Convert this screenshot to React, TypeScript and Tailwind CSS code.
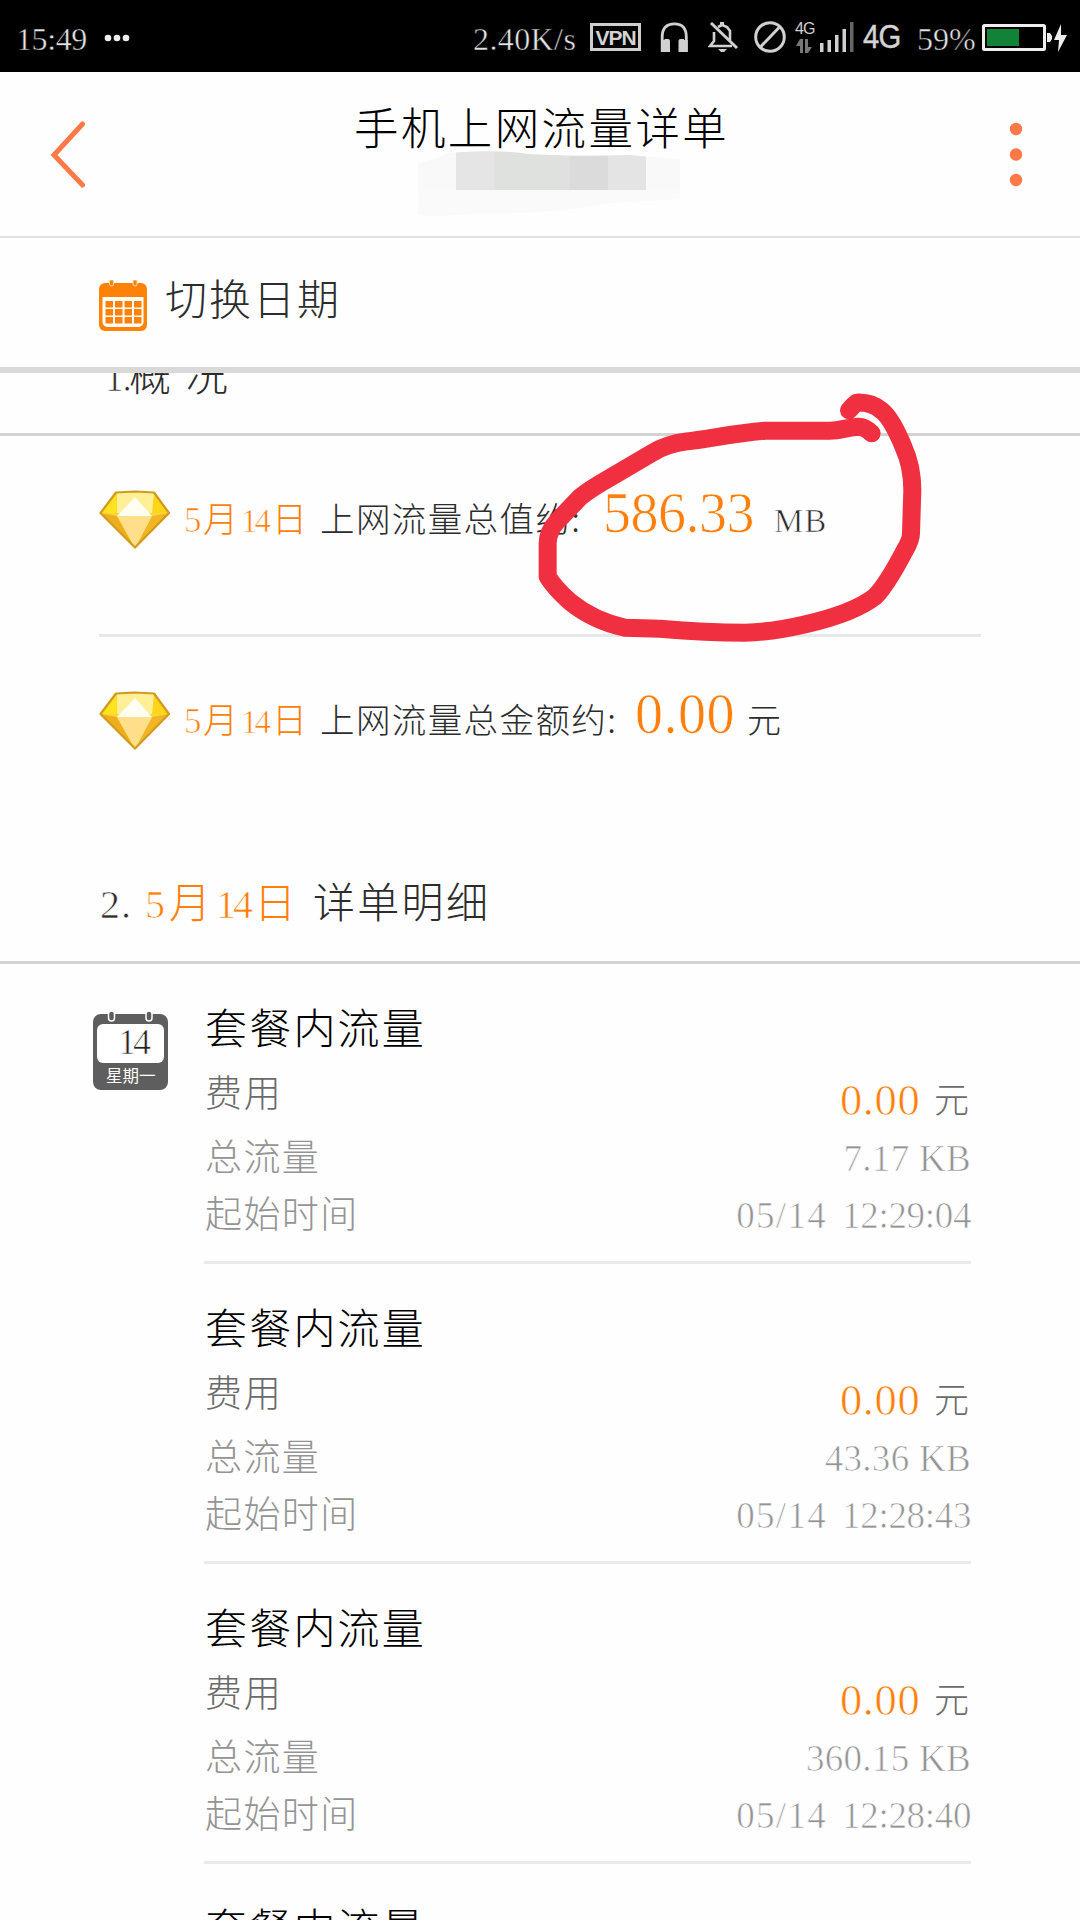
import React from "react";

const CJK = "font-['Noto_Sans_CJK_SC',sans-serif] font-light";
const LAT = "font-['Liberation_Serif',serif]";

function C({ className = "", children }: { className?: string; children: React.ReactNode }) {
  return <span className={`${CJK} block shrink-0 whitespace-pre leading-none ${className}`}>{children}</span>;
}

// A thin outline in the page colour slims the strokes of the serif digits.
function L({ dark = false, className = "", children }: { dark?: boolean; className?: string; children: React.ReactNode }) {
  const slim = dark ? "[-webkit-text-stroke:0.5px_#000]" : "[-webkit-text-stroke:0.7px_#fefefe]";
  return <span className={`${LAT} ${slim} block shrink-0 whitespace-pre leading-none ${className}`}>{children}</span>;
}

function StatusBar() {
  return (
    <div className="flex h-[72px] shrink-0 items-start bg-black text-[#e4e4e4]">
      <L dark className="ml-[16px] mt-[23px] w-[88px] text-[32px] tracking-[-0.4px]">15:49</L>
      <svg className="mt-[33px] shrink-0" width="28" height="10" fill="#eee">
        <circle cx="4" cy="5" r="3.3" />
        <circle cx="13" cy="5" r="3.3" />
        <circle cx="22" cy="5" r="3.3" />
      </svg>
      <L dark className="ml-[341px] mt-[23px] w-[115px] text-[32px] tracking-[0.4px]">2.40K/s</L>
      <div className="ml-[2px] mt-[23px] flex h-[28px] w-[51px] shrink-0 items-center justify-center border-3 border-[#cfcfcf] font-['Liberation_Sans',sans-serif] text-[21px] leading-none font-bold tracking-[-1px] text-[#d4d4d4]">
        VPN
      </div>
      <svg className="ml-[19px] mt-[22px] shrink-0" width="29" height="30" viewBox="0 0 29 30">
        <path d="M2.200 30V15C2.200 6 7 1.800 14.500 1.800S26.300 6 26.300 15v15" fill="none" stroke="#d0d0d0" strokeWidth="2.800" />
        <path d="M4.500 17H8q2 0 2 2v11H4.500zM24 17h-3.500q-2 0-2 2v11H24z" fill="#d0d0d0" />
        <path d="M1 18h4v12H1zM24 18h3.700v12H24z" fill="#d0d0d0" />
      </svg>
      <svg className="ml-[19px] mt-[22px] shrink-0" width="31" height="31" viewBox="0 0 31 31" fill="none" stroke="#d0d0d0" strokeWidth="2.6">
        <path d="M6 10v9l-4 5h22M10 5l4-2 5 2 3 4v9" />
        <path d="M3 1l26 25" strokeWidth="3" />
        <path d="M10 27h9l-3 3h-3z" fill="#d0d0d0" stroke="none" />
        <path d="M12 0h4v4h-4z" fill="#d0d0d0" stroke="none" />
      </svg>
      <svg className="ml-[14px] mt-[21px] shrink-0" width="34" height="32" viewBox="0 0 34 32" fill="none" stroke="#d0d0d0" strokeWidth="3">
        <circle cx="17" cy="16" r="14.3" />
        <path d="M7 26.500L27 5.500" />
      </svg>
      <div className="ml-[8px] mt-[21px] w-[25px] shrink-0">
        <div className="font-['Liberation_Sans',sans-serif] text-[16px] leading-[16px] tracking-[-1px] text-[#d0d0d0]">4G</div>
        <svg width="18" height="16" viewBox="0 0 18 16" fill="#777">
          <path d="M5 2h3v14H5V9H1zM10 2h3v8h4l-4 6h-3z" />
        </svg>
      </div>
      <svg className="mt-[22px] shrink-0" width="35" height="30" fill="#d0d0d0">
        <rect x="0" y="21" width="3.500" height="9" />
        <rect x="7.500" y="18" width="3.500" height="12" />
        <rect x="15" y="13" width="3.500" height="17" />
        <rect x="22.500" y="7" width="3.500" height="23" />
        <rect x="30" y="0" width="3.500" height="30" fill="#666" />
      </svg>
      <span className="ml-[8px] mt-[19px] block w-[54px] shrink-0 font-['Liberation_Sans',sans-serif] text-[34px] leading-none text-[#d4d4d4] [-webkit-text-stroke:0.5px_#d4d4d4]">
        <span className="inline-block origin-left scale-x-[0.86] tracking-[-1px]">4G</span>
      </span>
      <L dark className="mt-[23px] w-[65px] text-[32px]">59%</L>
      <svg className="mt-[23px] shrink-0" width="87" height="30" viewBox="0 0 87 30">
        <rect x="1.500" y="2.500" width="61" height="24" rx="1" fill="none" stroke="#eee" strokeWidth="3" />
        <rect x="5" y="6" width="32" height="17" fill="#128237" />
        <path d="M65 10h3l2 3v3l-2 3h-3z" fill="#eee" />
        <path d="M79 1L72 17h5l-1 12 9-17h-6z" fill="#eee" />
      </svg>
    </div>
  );
}

function Header() {
  return (
    <header className="relative flex h-[166px] shrink-0 items-start border-b-2 border-[#e0e0e0]">
      <svg className="ml-[49px] mt-[49px] shrink-0" width="38" height="68" viewBox="0 0 38 68">
        <path d="M33.500 3L5 34l28.500 30" fill="none" stroke="#ff7847" strokeWidth="5" strokeLinecap="round" />
      </svg>
      <C className="relative z-10 ml-[267px] mt-[32px] w-[400px] text-[44.500px] tracking-[2.400px] text-black">手机上网流量详单</C>
      <svg className="ml-[253px] mt-[49px] shrink-0" width="18" height="68" fill="#ff7847">
        <circle cx="9" cy="8" r="6.200" />
        <circle cx="9" cy="33.500" r="6.200" />
        <circle cx="9" cy="59" r="6.200" />
      </svg>
      <svg className="absolute left-[418px] top-[79px]" width="268" height="68" viewBox="0 0 268 68">
        <defs>
          <clipPath id="smudge">
            <path d="M0 12Q18 8 30 2Q80 -2 110 3Q165 6 210 4L262 8V48L190 52Q130 64 60 62Q20 66 0 64z" />
          </clipPath>
        </defs>
        <g clipPath="url(#smudge)">
          <rect width="268" height="68" fill="#f8f9f8" />
          <rect y="39" width="268" height="29" fill="#fafafa" />
          <rect x="38" y="0" width="38" height="39" fill="#e5e5e5" />
          <rect x="76" y="0" width="76" height="39" fill="#dfe1df" />
          <rect x="152" y="0" width="38" height="39" fill="#dadbda" />
          <rect x="190" y="0" width="38" height="39" fill="#e3e4e3" />
        </g>
      </svg>
    </header>
  );
}

function OrangeCalendar() {
  return (
    <svg className="shrink-0" width="48" height="52" viewBox="0 0 48 52">
      <rect y="3" width="48" height="48" rx="6" fill="#ff8208" />
      <path d="M10.500 0h4v4a2 2 0 0 1-4 0zM34 0h4v4a2 2 0 0 1-4 0z" fill="#ff8208" stroke="#ffd9b0" strokeWidth="1" />
      <path d="M3.500 17h41v25a5 5 0 0 1-5 5h-31a5 5 0 0 1-5-5z" fill="#fff" />
      {[21, 29, 37].map((y) =>
        [6.5, 16, 25.5, 35].map((x) => <rect key={`${x}-${y}`} x={x} y={y} width="7.500" height="6.500" fill="#ff8208" />)
      )}
    </svg>
  );
}

function Gem() {
  return (
    <svg className="shrink-0 self-start" width="72" height="60" viewBox="0 0 72 60">
      <path d="M17 2.500L36 1l19 1.500L70 23 36 58.500 1.500 23z" fill="#fbd63f" />
      <path d="M17 2.500L1.500 23H18z" fill="#ffe31f" />
      <path d="M55 2.500L70 23H53z" fill="#ffd51b" />
      <path d="M18 3L36 1l19 2-2 20H18z" fill="#fff098" />
      <path d="M36 7L18 26h35z" fill="#fffef2" />
      <path d="M1.500 23L18 26l18 32z" fill="#eeae1e" />
      <path d="M70 23L53 26 36 58z" fill="#f2b526" />
      <path d="M18 26h35L36 58z" fill="#ffdf8a" />
      <path d="M17 2.500L36 1.500l19 1L70 23 36 57.500 1.500 23z" fill="none" stroke="#d29a1c" strokeWidth="2.200" strokeLinejoin="round" />
    </svg>
  );
}

function SmallDate() {
  return (
    <>
      <L className="w-[19px] text-[35px]">5</L>
      <C className="w-[38px] text-[35px]">月</C>
      <L className="w-[31px] text-[33px] tracking-[-3px]">14</L>
      <C className="w-[48px] text-[35px]">日</C>
    </>
  );
}

function DayIcon() {
  return (
    <div className="relative mt-[46px] h-[80px] w-[75px] shrink-0">
      <svg width="75" height="80" viewBox="0 0 75 80">
        <rect y="4" width="75" height="76" rx="8" fill="#5e5e5e" />
        <rect x="4" y="14" width="67" height="39" rx="6" fill="#fff" />
        <rect x="15.500" y="1" width="6" height="10" rx="3" fill="#5e5e5e" stroke="#fff" strokeWidth="1.500" />
        <rect x="53" y="1" width="6" height="10" rx="3" fill="#5e5e5e" stroke="#fff" strokeWidth="1.500" />
      </svg>
      <L className="absolute left-[25px] top-[14px] text-[36px] tracking-[-3px] text-[#222]">14</L>
      <span className="absolute left-[13px] top-[57px] font-['Noto_Sans_CJK_SC',sans-serif] text-[16.500px] leading-none whitespace-nowrap text-white">
        星期一
      </span>
    </div>
  );
}

function Record({ total, time }: { total: string; time: string }) {
  return (
    <div className="h-[300px] w-[767px] shrink-0 pt-[41px]">
      <C className="ml-px h-[64px] text-[42px] tracking-[2.200px] text-black">套餐内流量</C>
      <div className="flex h-[66px] items-start text-[#6b6b6b]">
        <C className="ml-px mt-[4px] flex-1 text-[37px] tracking-[1.800px]">费用</C>
        <L className="mt-[9px] w-[94px] text-[44.500px] tracking-[0.600px] text-[#ff7f0a]">0.00</L>
        <C className="mt-[11px] w-[37px] text-[35px]">元</C>
      </div>
      <div className="flex h-[57px] items-start text-[#949494]">
        <C className="ml-px mt-[2px] flex-1 text-[37px] tracking-[1.400px]">总流量</C>
        <L className="mt-[5px] text-[37px] tracking-[0.300px]">{total}</L>
      </div>
      <div className="flex h-[72px] items-start border-b-3 border-[#eaeaea] text-[#949494]">
        <C className="ml-px mt-[2px] flex-1 text-[37px] tracking-[1.400px]">起始时间</C>
        <L className="mr-[15px] mt-[5px] text-[37px] tracking-[1.300px]">05/14</L>
        <L className="mt-[5px] w-[129px] text-[37px] tracking-[-0.300px]">{time}</L>
      </div>
    </div>
  );
}

export default function App() {
  return (
    <div className="relative flex h-[1920px] w-[1080px] flex-col overflow-hidden bg-[#fefefe] text-[#2c2c2c]">
      <StatusBar />
      <Header />
      <div className="flex h-[135px] shrink-0 items-start border-b-6 border-[#d9d9d9]">
        <div className="ml-[99px] mt-[42px]">
          <OrangeCalendar />
        </div>
        <C className="ml-[18px] mt-[38px] text-[42px] tracking-[2px]">切换日期</C>
      </div>
      <div className="h-[63px] shrink-0 overflow-hidden border-b-3 border-[#d3d3d3]">
        <div className="-mt-[21px] flex items-baseline">
          <L className="ml-[105px] w-[24px] text-[37px] tracking-[-1px]">1.</L>
          <C className="w-[57px] text-[42px]">概</C>
          <C className="text-[42px]">况</C>
        </div>
      </div>

      <div className="mx-[99px] flex h-[201px] shrink-0 items-start border-b-3 border-[#e8e8e8] pt-[54px]">
        <Gem />
        <div className="-mt-[5px] ml-[13px] flex items-baseline text-[#ff7f0a]">
          <SmallDate />
          <C className="w-[283px] text-[34.500px] tracking-[1.400px] text-[#2c2c2c]">上网流量总值约:</C>
          <L className="w-[171px] text-[56px] tracking-[-0.500px]">586.33</L>
          <L className="text-[33px] tracking-[1px] text-[#2c2c2c]">MB</L>
        </div>
      </div>
      <div className="mx-[99px] flex h-[201px] shrink-0 items-start pt-[54px]">
        <Gem />
        <div className="-mt-[5px] ml-[13px] flex items-baseline text-[#ff7f0a]">
          <SmallDate />
          <C className="w-[315px] text-[34.500px] tracking-[1.400px] text-[#2c2c2c]">上网流量总金额约:</C>
          <L className="w-[112px] text-[56px] tracking-[0.500px]">0.00</L>
          <C className="text-[34px] text-[#2c2c2c]">元</C>
        </div>
      </div>

      <div className="flex h-[126px] shrink-0 items-baseline border-b-3 border-[#d3d3d3] pt-[41px]">
        <L className="ml-[100px] w-[45px] text-[40px] tracking-[1px]">2.</L>
        <L className="w-[24px] text-[40px] text-[#ff7f0a]">5</L>
        <C className="w-[47px] text-[42px] text-[#ff7f0a]">月</C>
        <L className="w-[38px] text-[40px] tracking-[-3px] text-[#ff7f0a]">14</L>
        <C className="w-[59px] text-[42px] text-[#ff7f0a]">日</C>
        <C className="text-[42px] tracking-[2.300px]">详单明细</C>
      </div>

      <div className="flex shrink-0 items-start pl-[93px]">
        <DayIcon />
        <div className="ml-[36px] flex flex-col">
          <Record total="7.17 KB" time="12:29:04" />
          <Record total="43.36 KB" time="12:28:43" />
          <Record total="360.15 KB" time="12:28:40" />
          <C className="ml-px mt-[41px] text-[42px] tracking-[2.200px] text-black">套餐内流量</C>
        </div>
      </div>

      <svg className="absolute left-[520px] top-[380px]" width="420" height="270" viewBox="0 0 1260 810">
        <path
          d="M1055 160Q1035 140 1015 140C985 142 960 152 930 152L735 152C640 160 560 178 500 184Q440 192 400 217L270 293Q205 330 180 352L110 425Q83 455 83 490L83 590Q105 625 150 665Q220 722 315 743L420 746Q560 758 675 758Q760 756 860 732Q1000 700 1065 650Q1100 615 1155 510Q1173 480 1173 460L1177 330Q1177 260 1150 200Q1115 115 1085 92Q1055 66 1010 68Q1000 75 987 91"
          fill="none"
          stroke="#f03040"
          strokeWidth="54"
          strokeLinecap="round"
          strokeLinejoin="round"
        />
      </svg>
    </div>
  );
}
